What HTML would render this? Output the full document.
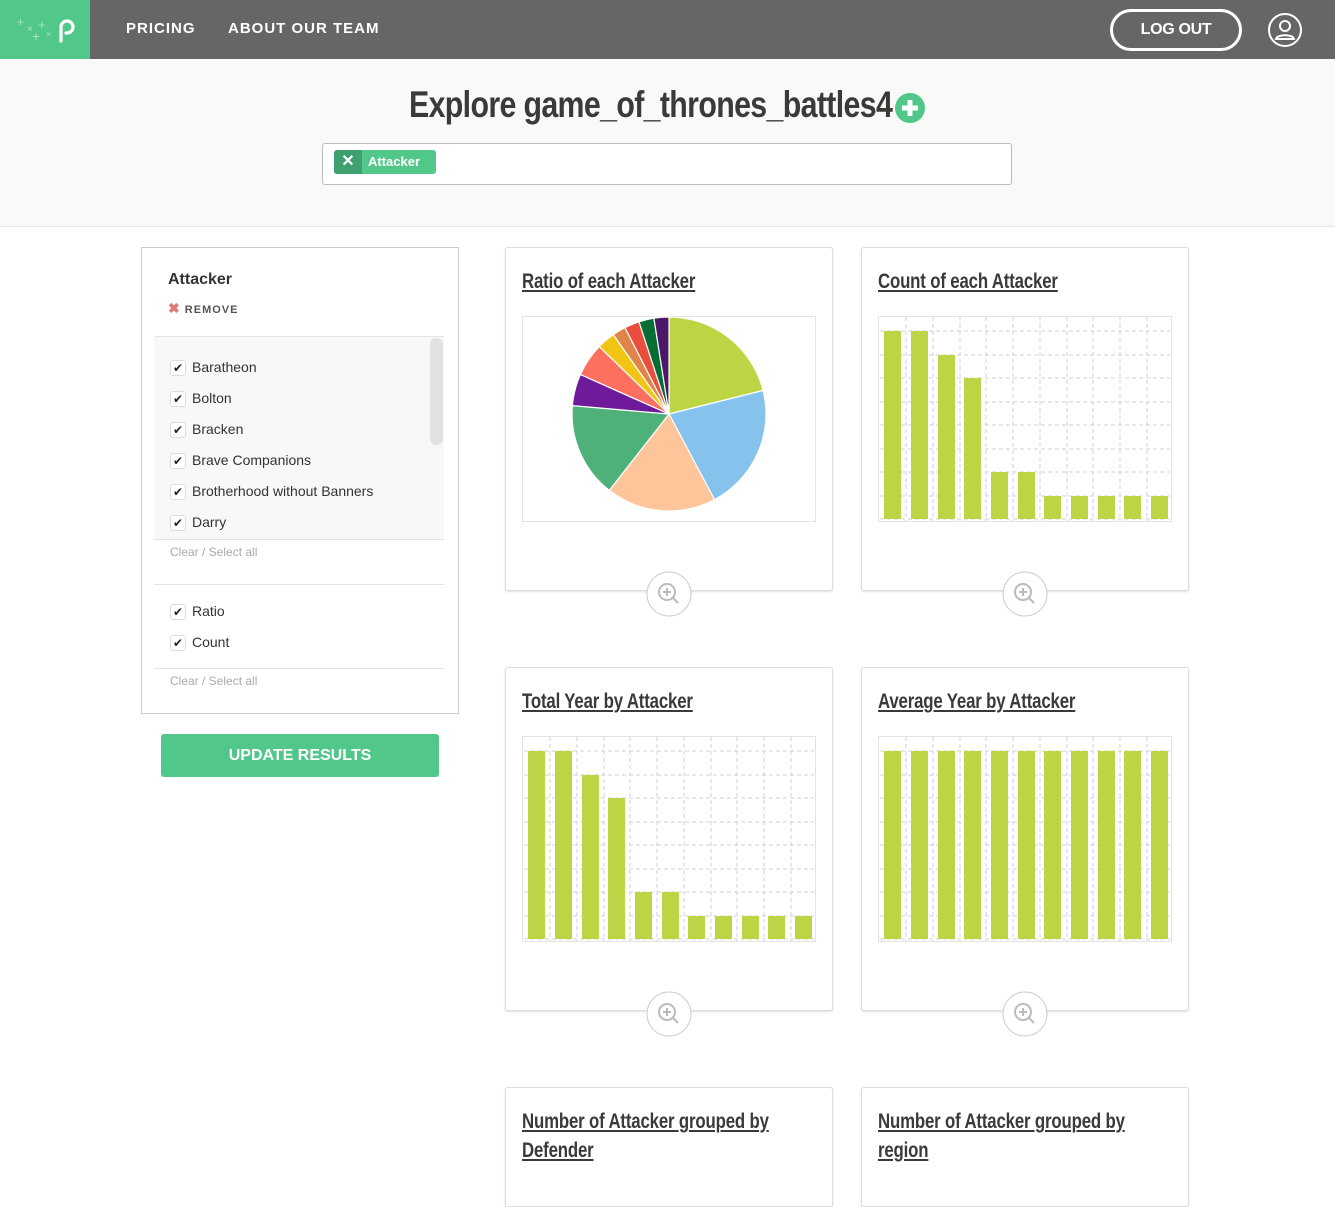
<!DOCTYPE html>
<html><head><meta charset="utf-8"><style>
*{box-sizing:border-box;margin:0;padding:0}
body{width:1335px;height:1172px;overflow:hidden;background:#fff;font-family:"Liberation Sans",sans-serif;color:#333;position:relative}
.abs{position:absolute}
.nav{left:0;top:0;width:1335px;height:59px;background:#666}
.logo{left:0;top:0;width:90px;height:59px;background:#52c78a}
.navl{top:20px;color:#fff;font-weight:bold;font-size:15px;letter-spacing:1px}
.hero{left:0;top:59px;width:1335px;height:168px;background:#f9f9f7;border-bottom:1px solid #e6e6e6}
.cond{font-family:"Liberation Sans",sans-serif;font-weight:bold;transform:scaleX(.8);transform-origin:0 0}
.card{background:#fff;border:1px solid #ddd;border-radius:3px;box-shadow:0 1px 2px rgba(0,0,0,.12);width:328px}
.ct{font-size:21px;color:#3a3a3a;text-decoration:underline;line-height:29px;letter-spacing:-.2px}
.chk{width:16px;height:16px;border:1px solid #ddd;border-radius:3px;background:#fff;font-size:12px;line-height:14px;text-align:center;color:#222}
.item{font-size:14px;color:#333;left:170px}
.item span.t{position:absolute;left:22px;top:-1px;white-space:nowrap}
.small{font-size:12px;color:#aaa}
</style></head><body>
<div class="abs nav"></div>
<div class="abs logo">
<svg width="90" height="59" viewBox="0 0 90 59">
<text x="17" y="26" font-size="12" fill="#a8e4c4">+</text><text x="27" y="32" font-size="10" fill="#a8e4c4">×</text><text x="38" y="29" font-size="13" fill="#a8e4c4">+</text><text x="32" y="41" font-size="14" fill="#a8e4c4">+</text><text x="46" y="37" font-size="9" fill="#a8e4c4">×</text>
<path d="M61 41V27a6 6 0 1 1 6 6h-1" stroke="#fff" stroke-width="3.2" fill="none" stroke-linecap="round"/>
</svg></div>
<div class="abs navl" style="left:126px">PRICING</div>
<div class="abs navl" style="left:228px">ABOUT OUR TEAM</div>
<div class="abs" style="left:1110px;top:9px;width:132px;height:42px;border:3px solid #fff;border-radius:21px;color:#fff;font-weight:bold;font-size:16px;text-align:center;line-height:36px;letter-spacing:-.3px">LOG OUT</div>
<svg class="abs" style="left:1267px;top:12px" width="36" height="36" viewBox="0 0 36 36"><circle cx="18" cy="18" r="16" fill="none" stroke="#fff" stroke-width="2"/><circle cx="18" cy="14" r="5" fill="none" stroke="#fff" stroke-width="2"/><path d="M9 27c1-5 17-5 18 0z" fill="none" stroke="#fff" stroke-width="2"/></svg>
<div class="abs hero"></div>
<div class="abs" style="left:409px;top:84px;font-size:37px;font-weight:bold;color:#3a3a3a;letter-spacing:-.8px;white-space:nowrap;transform:scaleX(.82);transform-origin:0 0">Explore game_of_thrones_battles4</div>
<svg class="abs" style="left:894px;top:92px" width="32" height="32" viewBox="0 0 32 32"><circle cx="16" cy="16" r="15" fill="#52c78a"/><path d="M16 8v16M8 16h16" stroke="#fff" stroke-width="5"/></svg>
<div class="abs" style="left:322px;top:143px;width:690px;height:42px;border:1px solid #bbb;border-radius:3px;background:#fff"></div>
<div class="abs" style="left:334px;top:150px;width:102px;height:24px;border-radius:3px;background:#52c78a;overflow:hidden">
<div style="position:absolute;left:0;top:0;width:28px;height:24px;background:#3ea06e;color:#fff;font-weight:bold;text-align:center;line-height:24px;font-size:16px">✕</div>
<div style="position:absolute;left:34px;top:4px;color:#fff;font-weight:bold;font-size:13px">Attacker</div></div>

<div class="abs" style="left:141px;top:247px;width:318px;height:467px;border:1px solid #ccc;background:#fff"></div>
<div class="abs" style="left:168px;top:271px;font-size:16px;font-weight:bold;color:#333">Attacker</div>
<div class="abs" style="left:168px;top:300px;font-size:11px;font-weight:bold;color:#555;letter-spacing:1px"><span style="color:#e07a7a;font-size:14px">✖</span> REMOVE</div>
<div class="abs" style="left:154px;top:336px;width:290px;height:204px;background:#f8f8f6;border-top:1px solid #e3e3e3;border-bottom:1px solid #e3e3e3"></div>
<div class="abs" style="left:430px;top:338px;width:13px;height:107px;background:#e2e2e2;border-radius:6px"></div>
<div class="abs item" style="top:360px"><div class="chk">✔</div><span class="t">Baratheon</span></div>
<div class="abs item" style="top:391px"><div class="chk">✔</div><span class="t">Bolton</span></div>
<div class="abs item" style="top:422px"><div class="chk">✔</div><span class="t">Bracken</span></div>
<div class="abs item" style="top:453px"><div class="chk">✔</div><span class="t">Brave Companions</span></div>
<div class="abs item" style="top:484px"><div class="chk">✔</div><span class="t">Brotherhood without Banners</span></div>
<div class="abs item" style="top:515px"><div class="chk">✔</div><span class="t">Darry</span></div>
<div class="abs small" style="left:170px;top:545px">Clear / Select all</div>
<div class="abs" style="left:154px;top:584px;width:290px;height:1px;background:#e3e3e3"></div>
<div class="abs item" style="top:604px"><div class="chk">✔</div><span class="t">Ratio</span></div>
<div class="abs item" style="top:635px"><div class="chk">✔</div><span class="t">Count</span></div>
<div class="abs" style="left:154px;top:668px;width:290px;height:1px;background:#e3e3e3"></div>
<div class="abs small" style="left:170px;top:674px">Clear / Select all</div>
<div class="abs" style="left:161px;top:734px;width:278px;height:43px;background:#52c78a;border-radius:3px;color:#fff;font-weight:bold;font-size:16px;text-align:center;line-height:43px">UPDATE RESULTS</div>

<div class="abs card" style="left:505px;top:247px;height:344px"></div>
<div class="abs card" style="left:861px;top:247px;height:344px"></div>
<div class="abs card" style="left:505px;top:667px;height:344px"></div>
<div class="abs card" style="left:861px;top:667px;height:344px"></div>
<div class="abs card" style="left:505px;top:1087px;height:120px"></div>
<div class="abs card" style="left:861px;top:1087px;height:120px"></div>
<div class="abs cond ct" style="left:522px;top:267px;white-space:nowrap">Ratio of each Attacker</div>
<div class="abs cond ct" style="left:878px;top:267px;white-space:nowrap">Count of each Attacker</div>
<div class="abs cond ct" style="left:522px;top:687px;white-space:nowrap">Total Year by Attacker</div>
<div class="abs cond ct" style="left:878px;top:687px;white-space:nowrap">Average Year by Attacker</div>
<div class="abs cond ct" style="left:522px;top:1107px;width:355px">Number of Attacker grouped by Defender</div>
<div class="abs cond ct" style="left:878px;top:1107px;width:355px">Number of Attacker grouped by region</div>

<svg class="abs" style="left:522px;top:316px" width="294" height="206" viewBox="0 0 294 206">
<rect x=".5" y=".5" width="293" height="205" fill="#fff" stroke="#e3e3e3"/>
<g stroke="#fff" stroke-width="1.2">
<path d="M147 98L147 1A97 97 0 0 1 241.1 74.5Z" fill="#bdd544"/>
<path d="M147 98L241.1 74.5A97 97 0 0 1 192.5 183.6Z" fill="#85c3ed"/>
<path d="M147 98L192.5 183.6A97 97 0 0 1 87.3 174.4Z" fill="#fec59b"/>
<path d="M147 98L87.3 174.4A97 97 0 0 1 50.4 89.6Z" fill="#4fb17a"/>
<path d="M147 98L50.4 89.6A97 97 0 0 1 58.4 58.5Z" fill="#6e1a9a"/>
<path d="M147 98L58.4 58.5A97 97 0 0 1 77.2 30.6Z" fill="#fd705f"/>
<path d="M147 98L77.2 30.6A97 97 0 0 1 91.3 18.6Z" fill="#f2c414"/>
<path d="M147 98L91.3 18.6A97 97 0 0 1 103 11.6Z" fill="#e0844a"/>
<path d="M147 98L103 11.6A97 97 0 0 1 117 5.8Z" fill="#e94d3d"/>
<path d="M147 98L117 5.8A97 97 0 0 1 131.9 2.2Z" fill="#086d34"/>
<path d="M147 98L131.9 2.2A97 97 0 0 1 147 1Z" fill="#4b1767"/>
</g></svg>

<svg width="0" height="0" style="position:absolute"><defs>
<g id="grid"><rect x=".5" y=".5" width="293" height="205" fill="#fff" stroke="#e3e3e3"/>
<g stroke="#d0d0d0" stroke-dasharray="4 3"><path d="M28 1V205M55 1V205M82 1V205M108 1V205M135 1V205M162 1V205M189 1V205M215 1V205M242 1V205M269 1V205M2 15H292M2 39H292M2 62H292M2 86H292M2 109H292M2 133H292M2 156H292M2 180H292M2 203H292"/></g></g>
<g id="bars1" fill="#bdd544"><rect x="6" y="15" width="17" height="188"/><rect x="33" y="15" width="17" height="188"/><rect x="60" y="39" width="17" height="164"/><rect x="86" y="62" width="17" height="141"/><rect x="113" y="156" width="17" height="47"/><rect x="140" y="156" width="17" height="47"/><rect x="166" y="180" width="17" height="23"/><rect x="193" y="180" width="17" height="23"/><rect x="220" y="180" width="17" height="23"/><rect x="246" y="180" width="17" height="23"/><rect x="273" y="180" width="17" height="23"/></g>
<g id="bars2" fill="#bdd544"><rect x="6" y="15" width="17" height="188"/><rect x="33" y="15" width="17" height="188"/><rect x="60" y="15" width="17" height="188"/><rect x="86" y="15" width="17" height="188"/><rect x="113" y="15" width="17" height="188"/><rect x="140" y="15" width="17" height="188"/><rect x="166" y="15" width="17" height="188"/><rect x="193" y="15" width="17" height="188"/><rect x="220" y="15" width="17" height="188"/><rect x="246" y="15" width="17" height="188"/><rect x="273" y="15" width="17" height="188"/></g>
</defs></svg>
<svg class="abs" style="left:878px;top:316px" width="294" height="206"><use href="#grid"/><use href="#bars1"/></svg>
<svg class="abs" style="left:522px;top:736px" width="294" height="206"><use href="#grid"/><use href="#bars1"/></svg>
<svg class="abs" style="left:878px;top:736px" width="294" height="206"><use href="#grid"/><use href="#bars2"/></svg>

<svg class="abs" style="left:646px;top:571px" width="46" height="46"><circle cx="23" cy="23" r="22" fill="#fff" stroke="#ccc"/><circle cx="21" cy="21" r="8" fill="none" stroke="#bbb" stroke-width="2"/><path d="M17 21h8M21 17v8M27 27l5 5" stroke="#bbb" stroke-width="2"/></svg>
<svg class="abs" style="left:1002px;top:571px" width="46" height="46"><circle cx="23" cy="23" r="22" fill="#fff" stroke="#ccc"/><circle cx="21" cy="21" r="8" fill="none" stroke="#bbb" stroke-width="2"/><path d="M17 21h8M21 17v8M27 27l5 5" stroke="#bbb" stroke-width="2"/></svg>
<svg class="abs" style="left:646px;top:991px" width="46" height="46"><circle cx="23" cy="23" r="22" fill="#fff" stroke="#ccc"/><circle cx="21" cy="21" r="8" fill="none" stroke="#bbb" stroke-width="2"/><path d="M17 21h8M21 17v8M27 27l5 5" stroke="#bbb" stroke-width="2"/></svg>
<svg class="abs" style="left:1002px;top:991px" width="46" height="46"><circle cx="23" cy="23" r="22" fill="#fff" stroke="#ccc"/><circle cx="21" cy="21" r="8" fill="none" stroke="#bbb" stroke-width="2"/><path d="M17 21h8M21 17v8M27 27l5 5" stroke="#bbb" stroke-width="2"/></svg>
</body></html>
